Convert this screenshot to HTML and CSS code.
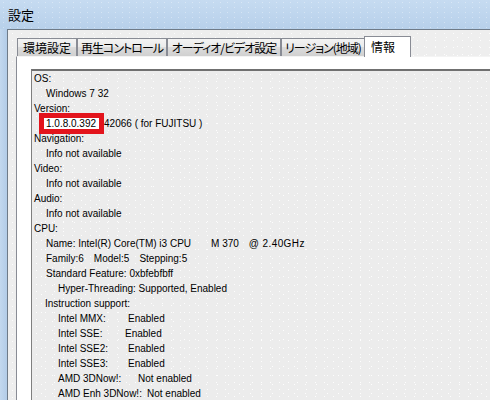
FILE: index.html
```html
<!DOCTYPE html>
<html lang="ja">
<head>
<meta charset="utf-8">
<title>設定</title>
<link rel="stylesheet" href="styles.css">
</head>
<body>
<div class="window">
  <div class="titlebar">設定</div>
  <div class="frame">
    <div class="frame-edge"></div>
    <div class="client">
      <div class="tabs">
        <div class="tab w60">環境設定</div>
        <div class="tab kana w90">再生コントロール</div>
        <div class="tab kana w114">オーディオ/ビデオ設定</div>
        <div class="tab kana w84">リージョン(地域)</div>
        <div class="tab active w47">情報</div>
      </div>
      <div class="panel">
        <div class="infobox">
          <div class="row">OS:</div>
          <div class="row l1">Windows 7 32</div>
          <div class="row">Version:</div>
          <div class="row l1"><span class="mark">1.0.8.0.392</span><span class="after-mark">42066 ( for FUJITSU )</span></div>
          <div class="row">Navigation:</div>
          <div class="row l1">Info not available</div>
          <div class="row">Video:</div>
          <div class="row l1">Info not available</div>
          <div class="row">Audio:</div>
          <div class="row l1">Info not available</div>
          <div class="row">CPU:</div>
          <div class="row l1">Name: Intel(R) Core(TM) i3 CPU<span class="cpu-model">M 370</span><span class="cpu-freq">@ 2.40GHz</span></div>
          <div class="row l1">Family:6<span class="sep">Model:5</span><span class="sep">Stepping:5</span></div>
          <div class="row l1">Standard Feature: 0xbfebfbff</div>
          <div class="row l2">Hyper-Threading: Supported, Enabled</div>
          <div class="row l1 instr">Instruction support:</div>
          <div class="row l2"><span class="key k70">Intel MMX:</span>Enabled</div>
          <div class="row l2"><span class="key k67">Intel SSE:</span>Enabled</div>
          <div class="row l2"><span class="key k70">Intel SSE2:</span>Enabled</div>
          <div class="row l2"><span class="key k70">Intel SSE3:</span>Enabled</div>
          <div class="row l2"><span class="key k80">AMD 3DNow!:</span>Not enabled</div>
          <div class="row l2"><span class="key k89">AMD Enh 3DNow!:</span>Not enabled</div>
        </div>
      </div>
    </div>
  </div>
</div>
</body>
</html>
```
FILE: styles.css
```css
html, body {
  margin: 0;
  padding: 0;
  overflow: hidden;
}
body {
  width: 490px;
  height: 400px;
  background: #f0f0f0;
}
.window {
  width: 540px;
  height: 400px;
  display: flex;
  flex-direction: column;
  background: #bdd4ec;
}
.titlebar {
  height: 29px;
  flex: none;
  box-sizing: border-box;
  padding: 6px 0 0 8px;
  font-family: "Noto Sans CJK JP", sans-serif;
  font-size: 13px;
  line-height: 17px;
  color: #000;
  background:
    radial-gradient(circle, rgba(255,255,255,0.35) 0.6px, transparent 1px) 0 0 / 7px 5px,
    linear-gradient(#c6dbf1, #b7d0ea);
}
.frame {
  flex: 1;
  display: flex;
  min-height: 0;
}
.frame-edge {
  width: 7px;
  flex: none;
  background: linear-gradient(90deg, #c3d8ee, #b3cce7);
}
.client {
  flex: 1;
  border-left: 1px solid #6f7b88;
  border-top: 1px solid #6f7b88;
  padding: 6px 0 0 8px;
  background:
    radial-gradient(circle, #fdfdfd 0.55px, transparent 0.9px) 0 0 / 9px 7px,
    radial-gradient(circle, #fdfdfd 0.55px, transparent 0.9px) 4px 3px / 11px 9px,
    #eeeeee;
  display: flex;
  flex-direction: column;
}
.tabs {
  display: flex;
  align-items: flex-end;
  padding-left: 1px;
  margin-bottom: -1px;
  position: relative;
  z-index: 1;
  font-family: "Noto Sans CJK JP", sans-serif;
  font-size: 12px;
  font-feature-settings: "palt";
  color: #000;
}
.tab {
  box-sizing: border-box;
  height: 18px;
  line-height: 17px;
  text-align: center;
  margin-bottom: 1px;
  border: 1px solid #898c95;
  border-bottom: none;
  background: linear-gradient(#f3f3f3 0%, #ebebeb 45%, #dcdcdc 50%, #d0d0d0 100%);
  white-space: nowrap;
  flex: none;
}
.tab.kana {
  letter-spacing: -1px;
}
.w60 { width: 60px; }
.w90 { width: 90px; }
.w114 { width: 114px; }
.w84 { width: 84px; }
.w47 { width: 47px; }
.tab.active {
  height: 21px;
  line-height: 19px;
  text-align: left;
  padding-left: 6px;
  margin-left: -1px;
  margin-bottom: 0;
  background: #fff;
}
.panel {
  flex: 1;
  border: 1px solid #898c95;
  border-top-color: #f4f4f4;
  background: #fff;
  padding: 12px 0 0 14px;
  display: flex;
  flex-direction: column;
}
.infobox {
  flex: 1;
  border-top: 2px solid #707070;
  border-left: 1px solid #7f7f7f;
  padding: 0 0 0 2px;
  background:
    radial-gradient(circle, #fdfdfd 0.55px, transparent 0.9px) 0 0 / 9px 7px,
    radial-gradient(circle, #fdfdfd 0.55px, transparent 0.9px) 4px 3px / 11px 9px,
    #ececec;
  font-family: "Liberation Sans", Arial, sans-serif;
  font-size: 10px;
  line-height: 15px;
  color: #000;
}
.row {
  white-space: nowrap;
}
.l1 { padding-left: 12px; }
.l2 { padding-left: 24px; }
.instr { padding-left: 11px; }
.mark {
  border: 5px solid #e3141c;
  background: #fff;
  padding: 0 3px 0 2px;
  margin-left: -7px;
}
.after-mark { margin-left: 0; }
.cpu-model { margin-left: 20px; }
.cpu-freq { margin-left: 10px; letter-spacing: 0.4px; }
.sep { margin-left: 10px; }
.key { display: inline-block; }
.k67 { width: 67px; }
.k70 { width: 70px; }
.k80 { width: 80px; }
.k89 { width: 89px; }
```
